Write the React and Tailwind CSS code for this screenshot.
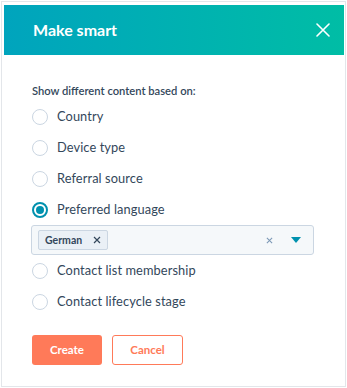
import React from "react";

function Radio({ label, checked }) {
  return (
    <div className="flex items-center h-[31px]">
      {checked ? (
        <span className="w-[16px] h-[16px] rounded-full border-2 border-[#0091ae] flex items-center justify-center bg-white">
          <span className="w-[8px] h-[8px] rounded-full bg-[#0091ae]" />
        </span>
      ) : (
        <span className="w-[16px] h-[16px] rounded-full border-[1.5px] border-[#cbd6e2] bg-white" />
      )}
      <span className="ml-[9px] text-[12.8px] text-[#33475b] leading-none tracking-[0.1px]">{label}</span>
    </div>
  );
}

export default function App() {
  return (
    <div className="w-[347px] h-[388px] bg-white pt-[1px] pl-[1px]" style={{ fontFamily: "Lato, 'Open Sans', sans-serif" }}>
      <div className="w-[345px] h-[386px] border border-[#e3e6ea] bg-white">
        <div className="mt-[3px] ml-[2px] w-[340px] h-[50px] bg-gradient-to-r from-[#00a4bd] to-[#00bda5] flex items-center justify-between pl-[29px] pr-[14px]">
          <span className="text-white font-bold text-[16px] leading-none">Make smart</span>
          <svg width="14" height="14" viewBox="0 0 14 14" fill="none">
            <path d="M1 1L13 13M13 1L1 13" stroke="white" strokeWidth="1.6" strokeLinecap="round" />
          </svg>
        </div>
        <div className="pl-[30px] pr-[28px]">
          <div className="mt-[28px] h-[16px] flex items-center text-[11.2px] font-semibold text-[#33475b]">
            Show different content based on:
          </div>
          <div className="mt-[2px]">
            <Radio label="Country" />
            <Radio label="Device type" />
            <Radio label="Referral source" />
            <Radio label="Preferred language" checked />
          </div>
          <div className="-ml-[1px] w-[283px] h-[30px] border border-[#cbd6e2] rounded-[3px] bg-[#f5f8fa] flex items-center pl-[6px] pr-[12px]">
            <div className="h-[20px] px-[6px] flex items-center bg-[#eaf0f6] border border-[#cbd6e2] rounded-[2px]">
              <span className="text-[10.5px] font-bold text-[#33475b] leading-none">German</span>
              <svg className="ml-[11px]" width="8" height="8" viewBox="0 0 8 8" fill="none">
                <path d="M1 1L7 7M7 1L1 7" stroke="#33475b" strokeWidth="1.2" />
              </svg>
            </div>
            <div className="flex-1" />
            <svg width="7" height="7" viewBox="0 0 8 8" fill="none">
              <path d="M1 1L7 7M7 1L1 7" stroke="#7c98b6" strokeWidth="1.2" />
            </svg>
            <svg className="ml-[18px]" width="10" height="6" viewBox="0 0 10 6">
              <path d="M0 0H10L5 6Z" fill="#0091ae" />
            </svg>
          </div>
          <div>
            <Radio label="Contact list membership" />
            <Radio label="Contact lifecycle stage" />
          </div>
          <div className="mt-[18px] flex gap-[10px]">
            <button className="w-[70px] h-[30px] rounded-[3px] bg-[#ff7a59] text-white text-[11.5px] font-bold">Create</button>
            <button className="w-[71px] h-[30px] rounded-[3px] border border-[#ff7a59] bg-white text-[#ff7a59] text-[11.5px] font-bold">Cancel</button>
          </div>
        </div>
      </div>
    </div>
  );
}
